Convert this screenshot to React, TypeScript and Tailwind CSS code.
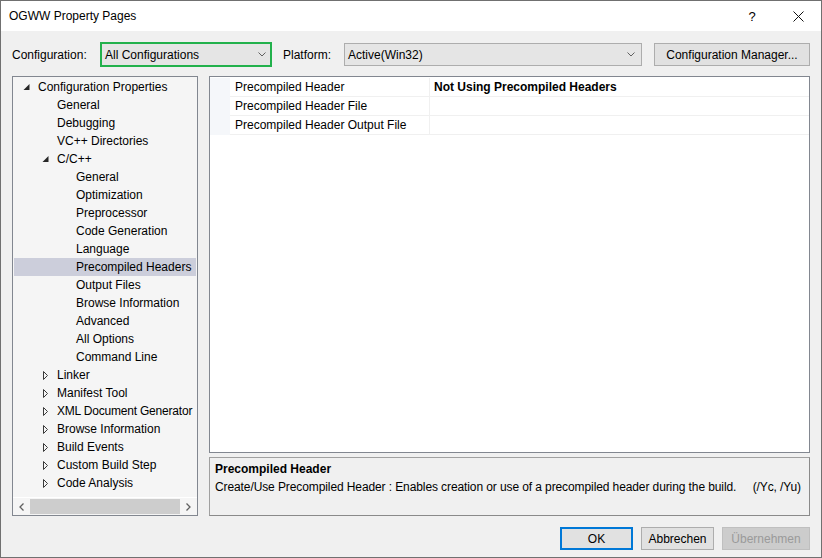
import React from "react";

type Node = { label: string; level: number; arrow?: "open" | "closed"; selected?: boolean; tight?: boolean };

const tree: Node[] = [
  { label: "Configuration Properties", level: 0, arrow: "open" },
  { label: "General", level: 1 },
  { label: "Debugging", level: 1 },
  { label: "VC++ Directories", level: 1 },
  { label: "C/C++", level: 1, arrow: "open" },
  { label: "General", level: 2 },
  { label: "Optimization", level: 2 },
  { label: "Preprocessor", level: 2 },
  { label: "Code Generation", level: 2 },
  { label: "Language", level: 2 },
  { label: "Precompiled Headers", level: 2, selected: true },
  { label: "Output Files", level: 2 },
  { label: "Browse Information", level: 2 },
  { label: "Advanced", level: 2 },
  { label: "All Options", level: 2 },
  { label: "Command Line", level: 2 },
  { label: "Linker", level: 1, arrow: "closed" },
  { label: "Manifest Tool", level: 1, arrow: "closed" },
  { label: "XML Document Generator", level: 1, arrow: "closed", tight: true },
  { label: "Browse Information", level: 1, arrow: "closed" },
  { label: "Build Events", level: 1, arrow: "closed" },
  { label: "Custom Build Step", level: 1, arrow: "closed" },
  { label: "Code Analysis", level: 1, arrow: "closed" },
];

const spacers = ["w-[7px]", "w-[26px]", "w-[45px]"];

function Arrow({ kind }: { kind?: "open" | "closed" }) {
  return (
    <svg width="17" height="18" viewBox="0 0 17 18" className="shrink-0">
      {kind === "open" && <polygon points="8.5,6 8.5,12 2.5,12" fill="#262626" />}
      {kind === "closed" && (
        <polygon points="3.5,5.5 7.5,9.5 3.5,13.5" fill="none" stroke="#3a3a3a" strokeWidth="1" />
      )}
    </svg>
  );
}

function Chevron() {
  return (
    <svg width="8" height="5" viewBox="0 0 8 5">
      <polyline points="0.5,0.5 4,4 7.5,0.5" fill="none" stroke="#606060" strokeWidth="1" />
    </svg>
  );
}

const rows = [
  { name: "Precompiled Header", value: "Not Using Precompiled Headers" },
  { name: "Precompiled Header File", value: "" },
  { name: "Precompiled Header Output File", value: "" },
];

export default function App() {
  return (
    <div className="w-[822px] h-[558px] border border-[#707070] flex flex-col bg-[#f0f0f0] font-['Liberation_Sans',Arial,sans-serif] text-[12px] text-black leading-none overflow-hidden">
      {/* Title bar */}
      <div className="h-[30px] bg-white flex items-center shrink-0">
        <span className="pl-[8px] flex-1 text-[12px]">OGWW Property Pages</span>
        <div className="w-[46px] h-full flex items-center justify-center text-[13px]">?</div>
        <div className="w-[46px] h-full flex items-center justify-center">
          <svg width="11" height="11" viewBox="0 0 11 11">
            <path d="M0.5 0.5 L10.5 10.5 M10.5 0.5 L0.5 10.5" stroke="#111" strokeWidth="1" />
          </svg>
        </div>
      </div>

      {/* Body */}
      <div className="flex-1 flex flex-col px-[11px]">
        {/* Top row */}
        <div className="mt-[11px] h-[25px] flex items-center shrink-0">
          <span className="w-[88px]">Configuration:</span>
          <div className="w-[172px] h-[25px] border-2 border-[#22b14c] bg-[#e5e5e5] flex items-center pl-[3px] pr-[4px]">
            <span className="flex-1">All Configurations</span>
            <Chevron />
          </div>
          <span className="ml-[11px] w-[61px]">Platform:</span>
          <div className="w-[298px] h-[23px] border border-[#adadad] bg-[#e5e5e5] flex items-center pl-[3px] pr-[6px]">
            <span className="flex-1">Active(Win32)</span>
            <Chevron />
          </div>
          <div className="ml-[12px] w-[156px] h-[23px] border border-[#adadad] bg-[#e1e1e1] flex items-center justify-center">
            Configuration Manager...
          </div>
        </div>

        {/* Main */}
        <div className="mt-[9px] h-[440px] flex gap-[11px] shrink-0">
          {/* Tree */}
          <div className="w-[186px] border border-[#828790] bg-[#f5f5f5] flex flex-col">
            <div className="flex-1 pt-[1px] overflow-hidden">
              {tree.map((n, i) => (
                <div
                  key={i}
                  className={`h-[18px] mx-[1px] flex items-center whitespace-nowrap ${n.selected ? "bg-[#cccedb]" : ""}`}
                >
                  <div className={`${spacers[n.level]} shrink-0`} />
                  <Arrow kind={n.arrow} />
                  <span className={n.tight ? "tracking-[-0.2px]" : ""}>{n.label}</span>
                </div>
              ))}
            </div>
            <div className="h-[18px] border-t border-white flex items-center shrink-0">
              <div className="w-[17px] h-full flex items-center justify-center">
                <svg width="5" height="8" viewBox="0 0 5 8">
                  <polyline points="4.5,0.5 1,4 4.5,7.5" fill="none" stroke="#606060" strokeWidth="1.3" />
                </svg>
              </div>
              <div className="flex-1 h-[15px] bg-[#cdcdcd]" />
              <div className="w-[17px] h-full flex items-center justify-center">
                <svg width="5" height="8" viewBox="0 0 5 8">
                  <polyline points="0.5,0.5 4,4 0.5,7.5" fill="none" stroke="#606060" strokeWidth="1.3" />
                </svg>
              </div>
            </div>
          </div>

          {/* Right column */}
          <div className="flex-1 flex flex-col gap-[4px]">
            <div className="flex-1 border border-[#828790] bg-white pt-[1px]">
              {rows.map((r, i) => (
                <div key={i} className="h-[19px] flex">
                  <div className="w-[20px] bg-[#f5f7fa] shrink-0" />
                  <div className="w-[200px] border-b border-r border-[#f0f0f0] flex items-center pl-[5px] shrink-0">
                    {r.name}
                  </div>
                  <div className="flex-1 border-b border-[#f0f0f0] flex items-center pl-[4px] font-bold">
                    {r.value}
                  </div>
                </div>
              ))}
            </div>
            <div className="h-[59px] border border-[#a0a0a0] border-b-[#8a8a8a] border-r-[#8a8a8a] bg-[#f0f0f0] pt-[2px] px-[5px] shrink-0">
              <div className="h-[18px] flex items-center font-bold">Precompiled Header</div>
              <div className="h-[18px] flex items-center">
                <span className="flex-1 tracking-[-0.1px]">
                  Create/Use Precompiled Header : Enables creation or use of a precompiled header during the build.
                </span>
                <span className="pr-[3px] tracking-[-0.1px]">(/Yc, /Yu)</span>
              </div>
            </div>
          </div>
        </div>

        {/* Buttons */}
        <div className="mt-[11px] h-[23px] flex justify-end gap-[8px] shrink-0">
          <div className="w-[73px] h-[23px] border-2 border-[#0078d7] bg-[#e1e1e1] flex items-center justify-center">OK</div>
          <div className="w-[73px] h-[23px] border border-[#adadad] bg-[#e1e1e1] flex items-center justify-center">Abbrechen</div>
          <div className="w-[88px] h-[23px] border border-[#bfbfbf] bg-[#cccccc] text-[#9a9a9a] flex items-center justify-center">Übernehmen</div>
        </div>
      </div>
    </div>
  );
}
